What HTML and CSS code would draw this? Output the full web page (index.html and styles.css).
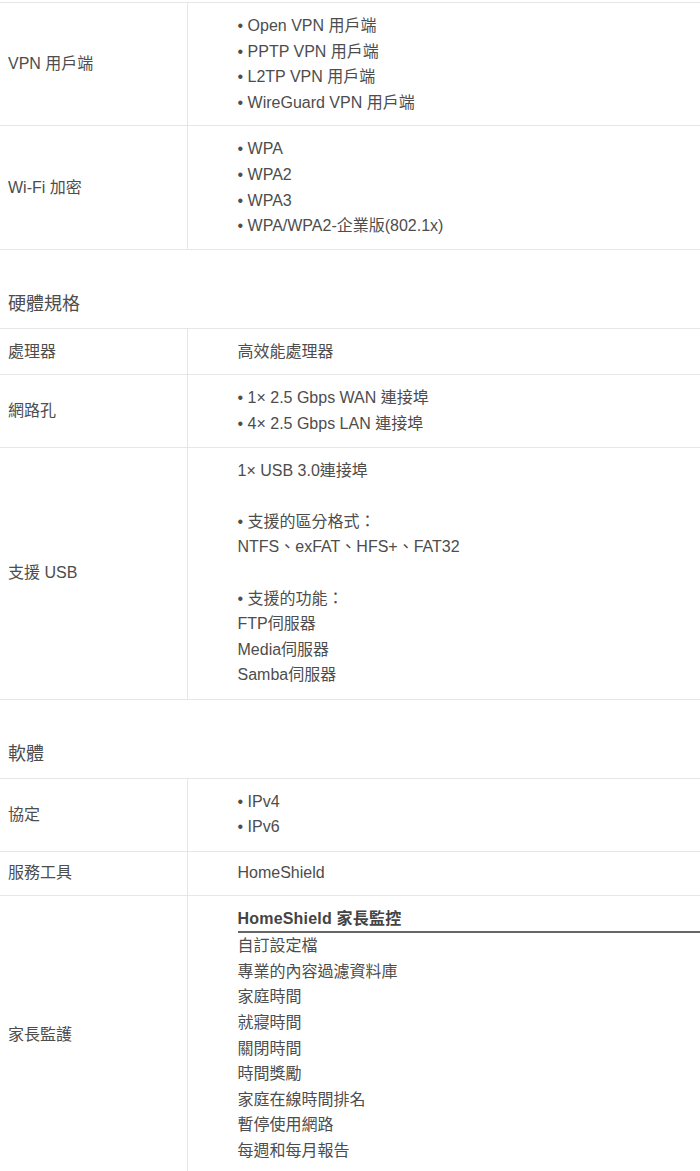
FILE: index.html
```html
<!DOCTYPE html>
<html lang="zh-Hant">
<head>
<meta charset="UTF-8" />
<meta name="viewport" content="width=device-width, initial-scale=1" />
<title>規格</title>
<link rel="stylesheet" href="styles.css">
</head>
<body>

<div class="specs">
  <table class="spec-table">
    <colgroup><col class="col-label"><col></colgroup>
    <tr class="stub"><td></td><td></td></tr>
    <tr>
      <td class="label">VPN 用戶端</td>
      <td class="value">
        • Open VPN 用戶端<br>
        • PPTP VPN 用戶端<br>
        • L2TP VPN 用戶端<br>
        • WireGuard VPN 用戶端
      </td>
    </tr>
    <tr>
      <td class="label">Wi-Fi 加密</td>
      <td class="value">
        • WPA<br>
        • WPA2<br>
        • WPA3<br>
        • WPA/WPA2-企業版(802.1x)
      </td>
    </tr>
  </table>

  <div class="section-title">硬體規格</div>
  <table class="spec-table">
    <colgroup><col class="col-label"><col></colgroup>
    <tr>
      <td class="label">處理器</td>
      <td class="value">高效能處理器</td>
    </tr>
    <tr>
      <td class="label">網路孔</td>
      <td class="value">
        • 1× 2.5 Gbps WAN 連接埠<br>
        • 4× 2.5 Gbps LAN 連接埠
      </td>
    </tr>
    <tr class="tall">
      <td class="label">支援 USB</td>
      <td class="value">
        1× USB 3.0連接埠<br>
        <br>
        • 支援的區分格式：<br>
        NTFS、exFAT、HFS+、FAT32<br>
        <br>
        • 支援的功能：<br>
        FTP伺服器<br>
        Media伺服器<br>
        Samba伺服器
      </td>
    </tr>
  </table>

  <div class="section-title">軟體</div>
  <table class="spec-table">
    <colgroup><col class="col-label"><col></colgroup>
    <tr class="tall">
      <td class="label">協定</td>
      <td class="value">
        • IPv4<br>
        • IPv6
      </td>
    </tr>
    <tr class="compact">
      <td class="label">服務工具</td>
      <td class="value">HomeShield</td>
    </tr>
    <tr>
      <td class="label">家長監護</td>
      <td class="value">
        <div class="sub-title">HomeShield 家長監控</div>
        自訂設定檔<br>
        專業的內容過濾資料庫<br>
        家庭時間<br>
        就寢時間<br>
        關閉時間<br>
        時間獎勵<br>
        家庭在線時間排名<br>
        暫停使用網路<br>
        每週和每月報告
      </td>
    </tr>
  </table>
</div>

</body>
</html>
```

FILE: styles.css
```css
body {
  margin: 0;
  padding: 0;
  background: #fff;
  color: #4d4d4d;
  font-family: "Liberation Sans", Arial, "Noto Sans CJK TC", sans-serif;
  font-size: 16px;
  line-height: 25.6px;
}
.specs {
  width: 700px;
}
.spec-table {
  width: 100%;
  border-collapse: collapse;
  table-layout: fixed;
}
.col-label {
  width: 187px;
}
.spec-table tr {
  border-bottom: 1px solid #e6e6e6;
}
.spec-table td {
  padding: 10px 0 10px 0;
  vertical-align: middle;
}
.spec-table td.label {
  padding-left: 8px;
  border-right: 1px solid #e6e6e6;
}
.spec-table td.value {
  padding-left: 50px;
}
.spec-table tr.tall td {
  padding-bottom: 11px;
}
.spec-table tr.compact td {
  padding-top: 8px;
  padding-bottom: 9px;
}
.spec-table tr.stub td {
  padding: 0;
  height: 2px;
}
.section-title {
  font-size: 18px;
  line-height: 27px;
  padding: 41px 8px 10px;
  border-bottom: 1px solid #e6e6e6;
}
.sub-title {
  font-weight: bold;
  color: #444;
  letter-spacing: 0.2px;
  border-bottom: 2px solid #666;
}
```
